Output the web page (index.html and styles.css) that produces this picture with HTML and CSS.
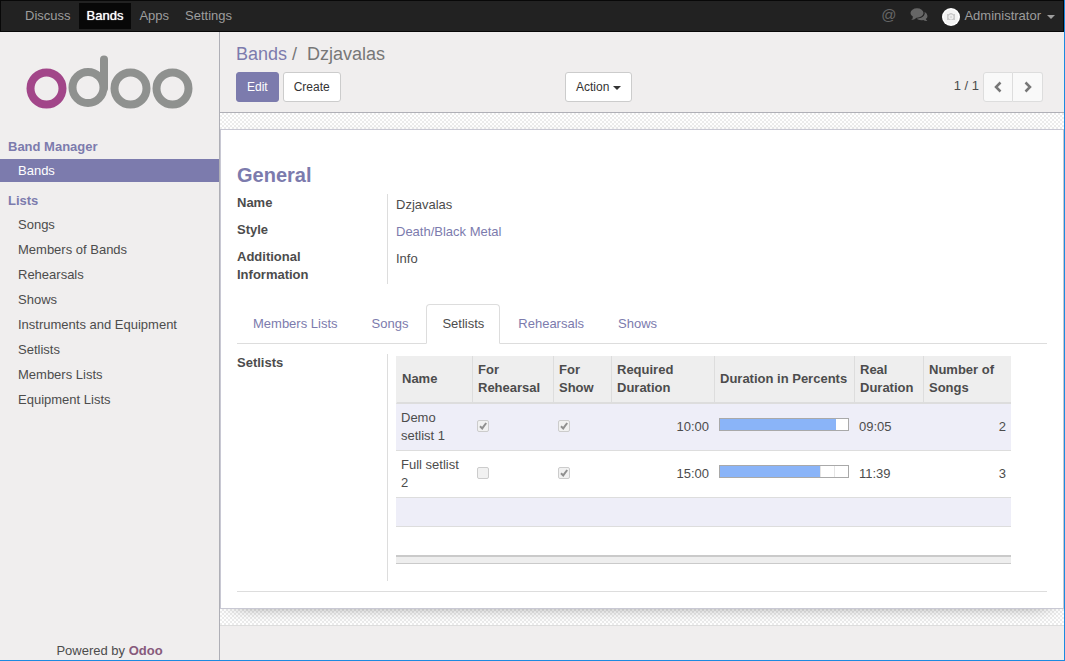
FILE: index.html
```html
<!DOCTYPE html>
<html lang="en">
<head>
<meta charset="utf-8">
<title>Dzjavalas - Odoo</title>
<link rel="stylesheet" href="styles.css">
</head>
<body>
<div class="app">
  <header class="navbar">
    <nav class="menu">
      <a href="#">Discuss</a>
      <a href="#" class="active">Bands</a>
      <a href="#">Apps</a>
      <a href="#">Settings</a>
    </nav>
    <div class="systray">
      <button class="tray-button" aria-label="Mentions">@</button>
      <button class="tray-button" aria-label="Conversations">
        <svg class="comments" viewBox="0 0 18 14" width="18" height="14">
          <ellipse cx="7" cy="5" rx="6.5" ry="4.7"/>
          <path d="M3 8 Q3 11 1 12 Q5 12 7 9Z"/>
          <path d="M14.6 3.8 Q17.500 5.600 17.500 8 Q17.500 10 15.800 11 Q16.200 12.200 17.400 13 Q14.800 13.200 13.300 12 Q9 12.700 6.500 10.700 Q12 10.600 14 7.600 Q15.200 5.800 14.600 3.800Z"/>
        </svg>
      </button>
      <button class="user">
        <svg class="avatar" viewBox="0 0 18 18" width="18" height="18">
          <circle cx="9" cy="9" r="9" fill="#fff"/>
          <circle cx="9" cy="9" r="7.500" fill="#f4f4f4"/>
          <path d="M5 6h2l1-1h2l1 1h2v6H5z" fill="#ccc"/>
          <circle cx="9" cy="9" r="2" fill="#ddd" stroke="#f8f8f8"/>
        </svg>
        <span>Administrator</span>
        <i class="caret"></i>
      </button>
    </div>
  </header>
  <div class="main">
    <aside class="sidebar">
      <a href="#" class="logo" aria-label="Odoo">
        <svg viewBox="0 0 168 54" width="168" height="54" fill="none" stroke-width="8">
          <circle cx="20.500" cy="33.500" r="16" stroke="#a24689"/>
          <circle cx="62" cy="32.500" r="15.500" stroke="#8f918f"/>
          <path d="M78 33V4.500" stroke="#8f918f" stroke-linecap="round"/>
          <circle cx="104.500" cy="33.500" r="16" stroke="#8f918f"/>
          <circle cx="146.500" cy="33.500" r="16" stroke="#8f918f"/>
        </svg>
      </a>
      <h2>Band Manager</h2>
      <ul>
        <li><a href="#" class="active">Bands</a></li>
      </ul>
      <h2>Lists</h2>
      <ul>
        <li><a href="#">Songs</a></li>
        <li><a href="#">Members of Bands</a></li>
        <li><a href="#">Rehearsals</a></li>
        <li><a href="#">Shows</a></li>
        <li><a href="#">Instruments and Equipment</a></li>
        <li><a href="#">Setlists</a></li>
        <li><a href="#">Members Lists</a></li>
        <li><a href="#">Equipment Lists</a></li>
      </ul>
      <footer>Powered by <a href="#">Odoo</a></footer>
    </aside>
    <main class="content">
      <section class="control-panel">
        <div class="breadcrumb"><a href="#">Bands</a><span>/</span><span class="current">Dzjavalas</span></div>
        <div class="toolbar">
          <div class="buttons">
            <button class="btn primary">Edit</button>
            <button class="btn">Create</button>
          </div>
          <button class="btn">Action <i class="caret"></i></button>
          <div class="pager">
            <span>1 / 1</span>
            <div class="pager-buttons">
              <button aria-label="Previous"><svg viewBox="0 0 10 12" width="10" height="12"><path d="M7.500 1.500 3 6l4.500 4.500"/></svg></button>
              <button aria-label="Next"><svg viewBox="0 0 10 12" width="10" height="12"><path d="M2.500 1.500 7 6l-4.500 4.500"/></svg></button>
            </div>
          </div>
        </div>
      </section>
      <div class="sheet-area">
        <article class="sheet">
          <h1>General</h1>
          <dl class="fields">
            <dt>Name</dt><dd>Dzjavalas</dd>
            <dt>Style</dt><dd><a href="#">Death/Black Metal</a></dd>
            <dt>Additional Information</dt><dd>Info</dd>
          </dl>
          <nav class="tabs">
            <a href="#">Members Lists</a>
            <a href="#">Songs</a>
            <a href="#" class="active">Setlists</a>
            <a href="#">Rehearsals</a>
            <a href="#">Shows</a>
          </nav>
          <div class="tab-content">
            <div class="list-label">Setlists</div>
            <div class="list">
              <table>
                <colgroup>
                  <col class="c-name"><col class="c-rehearsal"><col class="c-show"><col class="c-required"><col class="c-percent"><col class="c-real"><col>
                </colgroup>
                <thead>
                  <tr><th>Name</th><th>For Rehearsal</th><th>For Show</th><th>Required Duration</th><th>Duration in Percents</th><th>Real Duration</th><th>Number of Songs</th></tr>
                </thead>
                <tbody>
                  <tr>
                    <td>Demo setlist 1</td>
                    <td><input type="checkbox" aria-label="For Rehearsal" checked disabled></td>
                    <td><input type="checkbox" aria-label="For Show" checked disabled></td>
                    <td class="num">10:00</td>
                    <td><div class="bar" role="progressbar" aria-label="Duration in Percents" aria-valuenow="91"><div class="fill" style="width: 91%"></div></div></td>
                    <td>09:05</td>
                    <td class="num">2</td>
                  </tr>
                  <tr>
                    <td>Full setlist 2</td>
                    <td><input type="checkbox" aria-label="For Rehearsal" disabled></td>
                    <td><input type="checkbox" aria-label="For Show" checked disabled></td>
                    <td class="num">15:00</td>
                    <td><div class="bar" role="progressbar" aria-label="Duration in Percents" aria-valuenow="78"><div class="fill" style="width: 78%"></div></div></td>
                    <td>11:39</td>
                    <td class="num">3</td>
                  </tr>
                  <tr class="empty"><td colspan="7">&nbsp;</td></tr>
                  <tr class="empty"><td colspan="7">&nbsp;</td></tr>
                </tbody>
                <tfoot><tr><td colspan="7"></td></tr></tfoot>
              </table>
            </div>
          </div>
        </article>
      </div>
    </main>
  </div>
</div>
</body>
</html>
```
FILE: styles.css
```css
* { box-sizing: border-box; }

body {
  margin: 0;
  font: 13px/18px "Liberation Sans", Arial, sans-serif;
  color: #4c4c4c;
  background: #f0eeee;
}

a { color: #7c7bad; text-decoration: none; }
button { font: inherit; color: inherit; cursor: pointer; }
svg { display: block; }
h1, h2, ul, dl, dd { margin: 0; padding: 0; }
ul { list-style: none; }

.app {
  display: flex;
  flex-direction: column;
  min-height: 100vh;
  border: solid #1b8ae0;
  border-width: 0 1px 1px 0;
}

.caret {
  display: inline-block;
  border: 4px solid transparent;
  border-top-color: currentColor;
  border-bottom: 0;
  vertical-align: middle;
}

/* Top bar */
.navbar {
  display: flex;
  justify-content: space-between;
  align-items: center;
  height: 32px;
  padding: 0 8px 0 16px;
  background: #222;
  border: 1px solid #080808;
}
.menu { display: flex; }
.menu a { padding: 4px 8px; color: #9d9d9d; }
.menu .active { color: #fff; background: #080808; text-shadow: 0 0 1px #fff; }
.systray { display: flex; align-items: center; color: #9d9d9d; }
.tray-button, .user {
  display: flex;
  align-items: center;
  padding: 0;
  border: 0;
  background: none;
}
.tray-button { margin-right: 14px; padding-bottom: 2px; color: #666; font-size: 15px; }
.comments { fill: #666; }
.user { gap: 4px; }
.user .caret { margin-left: 2px; margin-top: 2px; }
.avatar { margin-top: 2px; }

/* Left menu */
.main { display: flex; flex: 1; }
.sidebar {
  display: flex;
  flex-direction: column;
  flex: 0 0 220px;
  border-right: 1px solid #afafb6;
}
.logo { padding: 23px 25px 22px 26px; }
.sidebar h2 {
  padding: 7px 8px 3px;
  font-size: 13px;
  line-height: 18px;
  color: #7c7bad;
}
.sidebar li a { display: block; padding: 4px 18px 3px; color: #4c4c4c; }
.sidebar li .active { padding: 3px 18px 2px; color: #fff; background: #7c7bad; }
.sidebar ul + h2 { padding: 10px 8px 2px; }
.sidebar footer { margin-top: auto; text-align: center; }
.sidebar footer a { color: #875a7b; font-weight: bold; }

/* Control panel */
.content { flex: 1; min-width: 0; }
.control-panel {
  padding: 12px 21px 10px 16px;
  border-bottom: 1px solid #afafb6;
}
.breadcrumb {
  display: flex;
  gap: 5px;
  margin-bottom: 8px;
  font-size: 18px;
  line-height: 20px;
  color: #777;
}
.current { margin-left: 5px; }
.toolbar { display: grid; grid-template-columns: 329px auto 1fr; }
.buttons { display: flex; gap: 4px; }
.btn {
  height: 30px;
  padding: 5px 10px;
  font-size: 12px;
  line-height: 18px;
  color: #333;
  background: #fff;
  border: 1px solid #ccc;
  border-radius: 3px;
}
.primary { color: #fff; background: #7c7bad; border-color: #7c7bad; }
.pager { display: flex; justify-content: flex-end; align-items: center; gap: 4px; }
.pager > span { padding-bottom: 2px; }
.pager-buttons { display: flex; }
.pager-buttons button {
  display: grid;
  place-items: center;
  width: 30px;
  height: 30px;
  padding: 0;
  background: #f9f9f9;
  border: 1px solid #ddd;
  border-radius: 3px 0 0 3px;
}
.pager-buttons button + button { border-left: 0; border-radius: 0 3px 3px 0; }
.pager-buttons path { fill: none; stroke: #777; stroke-width: 2.500; }

/* Form sheet */
.sheet-area {
  padding: 16px 0;
  overflow: hidden;
  background: repeating-conic-gradient(#ececec 0 25%, #fff 0 50%) 0 0 / 4px 4px;
  border-bottom: 1px solid #ddd;
}
.sheet {
  padding: 32px 16px 16px;
  background: #fff;
  border: 1px solid #c8c8d3;
  box-shadow: 0 5px 20px -15px #000;
}
.sheet h1 { font-size: 20px; line-height: 26px; color: #7c7bad; margin-bottom: 6px; }
.fields { display: grid; grid-template-columns: 151px 1fr; margin-bottom: 20px; }
.fields dt, .list-label { padding-right: 40px; font-weight: bold; border-right: 1px solid #ddd; }
.fields dt { min-height: 27px; }
.fields dd { padding: 2px 8px; }

.tabs { display: flex; gap: 2px; border-bottom: 1px solid #ddd; }
.tabs a {
  padding: 10px 15px;
  margin-bottom: -1px;
  border: 1px solid transparent;
  border-radius: 4px 4px 0 0;
}
.tabs .active {
  color: #4c4c4c;
  background: #fff;
  border-color: #ddd;
  border-bottom-color: #fff;
}
.tab-content {
  display: grid;
  grid-template-columns: 151px 1fr;
  padding: 10px 0;
  border-bottom: 1px solid #ddd;
}
.list { padding: 2px 36px 17px 8px; }

/* Setlist table */
table { width: 100%; table-layout: fixed; border-spacing: 0; }
.c-name { width: 76px; }
.c-rehearsal { width: 81px; }
.c-show { width: 58px; }
.c-required { width: 103px; }
.c-percent { width: 140px; }
.c-real { width: 69px; }
th {
  padding: 5px;
  text-align: left;
  background: #eee;
  border-left: 1px solid #ddd;
  border-bottom: 2px solid #ddd;
}
th:first-child { border-left-color: #eee; }
td { padding: 5px; border-bottom: 1px solid #ddd; }
tbody tr:nth-child(odd) { background: #eeeef8; }
.num { text-align: right; }
.empty:last-child td { border-bottom: 0; }
tfoot td {
  height: 9px;
  padding: 0;
  background: #eee;
  border-top: 2px solid #cacaca;
  border-bottom: 1px solid #cacaca;
}
input[type="checkbox"] {
  appearance: none;
  display: block;
  width: 12px;
  height: 12px;
  margin: 0 0 2px;
  border: 1px solid #ccc;
  border-radius: 2px;
  background: #f1f1f1 center / 10px 10px no-repeat;
}
input[type="checkbox"]:checked {
  background-image: url("data:image/svg+xml,%3Csvg xmlns='http://www.w3.org/2000/svg' viewBox='0 0 10 10'%3E%3Cpath d='M2 5.200 4.200 7.400 8.200 2' fill='none' stroke='%23909090' stroke-width='2'/%3E%3C/svg%3E");
}
.bar {
  height: 13px;
  margin-bottom: 5px;
  border: 1px solid #a9a9a9;
  background: repeating-linear-gradient(90deg, #fff 0 2px, #e5e5e5 2px 3px, #fff 3px 14px);
}
.fill { height: 100%; background: #8ab4f8; }
```
